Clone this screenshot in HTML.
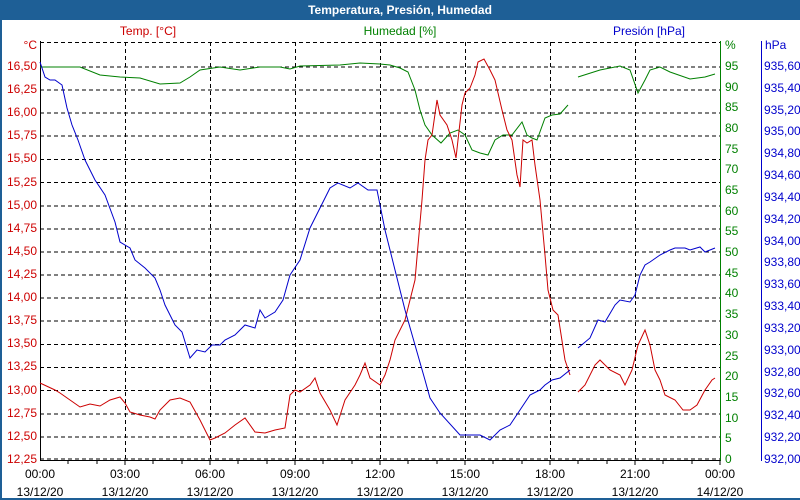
<!DOCTYPE html>
<html><head><meta charset="utf-8"><style>
html,body{margin:0;padding:0;background:#fff}
body{width:800px;height:500px;overflow:hidden;position:relative;font-family:"Liberation Sans",sans-serif}
#t{position:absolute;left:0;top:0;width:800px;height:20px;background:#1e5f96;color:#fff;font-weight:bold;font-size:12px;line-height:20px;text-align:center}
#f{position:absolute;left:0;top:20px;width:798px;height:478px;border-left:2px solid #1e5f96;border-bottom:2px solid #1e5f96}
svg{position:absolute;left:0;top:0}
</style></head><body>
<div id="t">Temperatura, Presión, Humedad</div>
<div id="f"></div>
<svg width="800" height="500" font-family="Liberation Sans, sans-serif" font-size="11">
<g stroke="#000" stroke-dasharray="4,3" stroke-width="1">
<line x1="40" y1="42.5" x2="720" y2="42.5"/>
<line x1="40" y1="67" x2="720" y2="67"/><line x1="40" y1="90" x2="720" y2="90"/><line x1="40" y1="113" x2="720" y2="113"/><line x1="40" y1="136" x2="720" y2="136"/><line x1="40" y1="159.5" x2="720" y2="159.5"/><line x1="40" y1="182.5" x2="720" y2="182.5"/><line x1="40" y1="206" x2="720" y2="206"/><line x1="40" y1="229" x2="720" y2="229"/><line x1="40" y1="252" x2="720" y2="252"/><line x1="40" y1="275" x2="720" y2="275"/><line x1="40" y1="298" x2="720" y2="298"/><line x1="40" y1="321" x2="720" y2="321"/><line x1="40" y1="344.5" x2="720" y2="344.5"/><line x1="40" y1="367.5" x2="720" y2="367.5"/><line x1="40" y1="390.5" x2="720" y2="390.5"/><line x1="40" y1="414" x2="720" y2="414"/><line x1="40" y1="437" x2="720" y2="437"/><line x1="40" y1="459" x2="720" y2="459"/>
<line x1="125.5" y1="42" x2="125.5" y2="460"/><line x1="210.5" y1="42" x2="210.5" y2="460"/><line x1="295.5" y1="42" x2="295.5" y2="460"/><line x1="380.5" y1="42" x2="380.5" y2="460"/><line x1="465.5" y1="42" x2="465.5" y2="460"/><line x1="550.5" y1="42" x2="550.5" y2="460"/><line x1="635.5" y1="42" x2="635.5" y2="460"/>
</g>
<line x1="40.5" y1="41" x2="40.5" y2="461" stroke="#000"/>
<line x1="40" y1="460.5" x2="721" y2="460.5" stroke="#000"/>
<line x1="720.5" y1="41" x2="720.5" y2="461" stroke="#008000"/>
<line x1="761.5" y1="41" x2="761.5" y2="461" stroke="#0000cc"/>
<g stroke="#000"><path d="M68 460v4M97 460v4M125 460v5M153 460v4M182 460v4M210 460v5M238 460v4M267 460v4M295 460v5M323 460v4M352 460v4M380 460v5M408 460v4M437 460v4M465 460v5M493 460v4M522 460v4M550 460v5M578 460v4M607 460v4M635 460v5M663 460v4M692 460v4M720 460v5"/></g>
<polyline fill="none" stroke="#008000" points="40,67 80,67 100,75 120,77 140,78 160,84 180,83 190,77 200,70 220,67 240,70 260,67 280,67 290,69 300,66 340,65 360,63 380,64 390,65 400,68 408,72 415,90 420,110 425,125 432,135 441,143 450,133 458,130 465,135 472,150 480,153 488,155 495,140 503,135 512,135 522,122 527,135 532,138 537,140 545,118 552,115 560,114 568,105"/>
<polyline fill="none" stroke="#008000" points="578,77 600,70 620,66 630,70 638,93 645,80 650,70 660,67 670,72 690,79 705,77 715,74"/>
<polyline fill="none" stroke="#cc0000" points="40,383 55,390 60,393 70,400 80,407 90,404 100,406 110,400 120,397 125,403 130,412 140,415 150,417 155,419 160,410 170,400 180,398 190,402 200,420 210,440 215,438 225,433 235,425 245,418 255,432 265,433 275,430 285,428 290,395 295,390 300,392 310,385 315,378 320,393 330,410 337,425 345,400 355,385 360,375 365,363 370,378 380,385 385,375 390,360 395,340 405,320 415,280 422,200 425,160 428,140 432,135 437,100 440,115 447,125 452,140 456,158 458,140 462,105 465,93 470,88 475,75 478,62 484,59 490,70 495,80 502,110 507,130 512,140 517,175 520,187 523,140 527,143 532,140 535,165 540,200 545,255 548,290 553,310 558,315 565,360 570,375"/>
<polyline fill="none" stroke="#cc0000" points="578,392 585,385 595,365 600,360 610,370 620,375 625,385 632,370 638,345 645,330 650,345 655,370 660,380 665,395 675,400 683,410 690,410 697,405 705,390 712,380 715,378"/>
<polyline fill="none" stroke="#0000cc" points="40,62 45,77 50,80 55,80 62,85 67,108 72,125 78,140 85,160 95,180 105,195 115,222 120,242 130,248 135,260 145,268 155,278 160,290 165,305 175,325 182,332 190,358 197,350 205,352 212,345 220,345 225,340 235,335 245,325 255,328 260,310 265,318 275,312 283,300 290,275 300,260 310,228 320,208 330,188 338,183 350,188 358,183 368,190 377,190 385,230 395,270 405,310 415,345 425,380 430,398 440,413 460,435 480,435 490,440 500,430 510,425 520,410 530,395 540,390 545,385 552,380 560,378 570,370"/>
<polyline fill="none" stroke="#0000cc" points="578,348 590,338 598,320 605,322 615,305 620,300 630,302 635,295 640,275 645,265 650,262 660,255 670,250 675,248 685,248 690,250 700,247 705,252 715,248"/>
<g fill="#cc0000" font-size="12">
<text x="148" y="35" text-anchor="middle">Temp. [°C]</text>
<text x="37" y="49" text-anchor="end">°C</text>
<g text-anchor="end" dominant-baseline="middle">
<text x="37" y="67">16,50</text><text x="37" y="90">16,25</text><text x="37" y="113">16,00</text><text x="37" y="136">15,75</text><text x="37" y="159">15,50</text><text x="37" y="183">15,25</text><text x="37" y="206">15,00</text><text x="37" y="229">14,75</text><text x="37" y="252">14,50</text><text x="37" y="275">14,25</text><text x="37" y="298">14,00</text><text x="37" y="321">13,75</text><text x="37" y="344">13,50</text><text x="37" y="367">13,25</text><text x="37" y="391">13,00</text><text x="37" y="414">12,75</text><text x="37" y="437">12,50</text><text x="37" y="460">12,25</text>
</g></g>
<g fill="#008000" font-size="12">
<text x="400" y="35" text-anchor="middle">Humedad [%]</text>
<text x="725" y="49">%</text>
<g dominant-baseline="middle">
<text x="725" y="67">95</text><text x="725" y="88">90</text><text x="725" y="108">85</text><text x="725" y="129">80</text><text x="725" y="150">75</text><text x="725" y="170">70</text><text x="725" y="191">65</text><text x="725" y="212">60</text><text x="725" y="232">55</text><text x="725" y="253">50</text><text x="725" y="274">45</text><text x="725" y="294">40</text><text x="725" y="315">35</text><text x="725" y="336">30</text><text x="725" y="357">25</text><text x="725" y="377">20</text><text x="725" y="398">15</text><text x="725" y="419">10</text><text x="725" y="439">5</text><text x="725" y="460">0</text>
</g></g>
<g fill="#0000cc" font-size="12">
<text x="685" y="35" text-anchor="end">Presión [hPa]</text>
<text x="765" y="49">hPa</text>
<g dominant-baseline="middle">
<text x="764" y="67">935,60</text><text x="764" y="89">935,40</text><text x="764" y="111">935,20</text><text x="764" y="132">935,00</text><text x="764" y="154">934,80</text><text x="764" y="176">934,60</text><text x="764" y="198">934,40</text><text x="764" y="220">934,20</text><text x="764" y="242">934,00</text><text x="764" y="263">933,80</text><text x="764" y="285">933,60</text><text x="764" y="307">933,40</text><text x="764" y="329">933,20</text><text x="764" y="351">933,00</text><text x="764" y="373">932,80</text><text x="764" y="394">932,60</text><text x="764" y="416">932,40</text><text x="764" y="438">932,20</text><text x="764" y="460">932,00</text>
</g></g>
<g fill="#000" font-size="12" text-anchor="middle">
<text x="40" y="478">00:00</text><text x="40" y="496">13/12/20</text>
<text x="125" y="478">03:00</text><text x="125" y="496">13/12/20</text>
<text x="210" y="478">06:00</text><text x="210" y="496">13/12/20</text>
<text x="295" y="478">09:00</text><text x="295" y="496">13/12/20</text>
<text x="380" y="478">12:00</text><text x="380" y="496">13/12/20</text>
<text x="465" y="478">15:00</text><text x="465" y="496">13/12/20</text>
<text x="550" y="478">18:00</text><text x="550" y="496">13/12/20</text>
<text x="635" y="478">21:00</text><text x="635" y="496">13/12/20</text>
<text x="720" y="478">00:00</text><text x="720" y="496">14/12/20</text>
</g>
</svg>
</body></html>
